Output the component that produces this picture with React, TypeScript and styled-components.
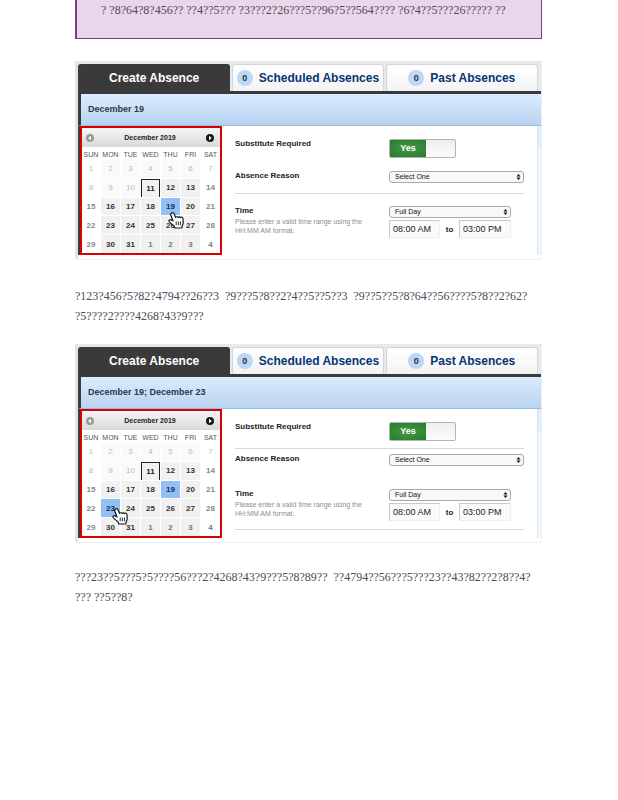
import React from "react";
import styled, { createGlobalStyle } from "styled-components";

const GlobalStyle = createGlobalStyle`
  * { box-sizing: border-box; }
  body { margin: 0; background: #fff; font-family: "Liberation Sans", Arial, sans-serif; color: #222; }
`;

const Page = styled.main`
  padding: 0 76px 24px 75px;
`;

const Callout = styled.aside`
  height: 39px;
  margin-bottom: 22px;
  padding: 0 24px;
  border: 1px solid #803c80;
  border-width: 0 1px 1px 2px;
  background: #e9d6ea;
`;

const Copy = styled.p`
  margin: 0;
  font: 12px/20px "Liberation Serif", "Times New Roman", serif;
  color: #4a4d57;
  white-space: pre;
`;

const Passage = styled.div<{ $last?: boolean }>`
  padding: ${(p) => (p.$last ? 24 : 26)}px 0 18px;
`;

const Panel = styled.section`
  border: 1px solid #eceef1;
  border-width: 3px 1px 1px 3px;
  border-top-color: #e5e9f0;
  border-left-color: #e0e5ed;
  border-radius: 0 0 3px 3px;
`;

const Tabs = styled.nav`
  display: grid;
  grid-template-columns: 152fr 151fr 152fr;
  column-gap: 2px;
  height: 30px;
  padding-right: 3px;
  border-bottom: 3px solid #3a3a3a;
  background: #e5e9f0;
`;

const Tab = styled.button<{ $active?: boolean }>`
  display: flex;
  align-items: center;
  justify-content: center;
  gap: 6px;
  padding: 0;
  border: 1px solid ${(p) => (p.$active ? "#3a3a3a" : "#d3d5d9")};
  border-bottom: 0;
  border-radius: 3px 3px 0 0;
  background: ${(p) => (p.$active ? "#3a3a3a" : "linear-gradient(#fff, #f3f3f4)")};
  color: ${(p) => (p.$active ? "#fff" : "#063574")};
  font: bold 12px/16px "Liberation Sans", Arial, sans-serif;
  white-space: nowrap;
`;

const Count = styled.span`
  width: 16px;
  height: 16px;
  border-radius: 8px;
  background: #bcd7f7;
  color: #333;
  font-size: 9px;
  text-align: center;
`;

const DateBar = styled.h2`
  height: 32px;
  margin: 0;
  padding: 0 7px;
  border-left: 3px solid #3a3a3a;
  border-bottom: 1px solid #9ab9e3;
  background: linear-gradient(#dcecfe, #b8d3f1);
  color: #2d3746;
  font-size: 9px;
  line-height: 31px;
`;

const Body = styled.div`
  display: flex;
  padding-bottom: 4px;
  background: linear-gradient(#3a3a3a, #3a3a3a) left top / 2px 129px no-repeat;
  padding-left: 2px;
`;

const Calendar = styled.div`
  position: relative;
  flex: none;
  width: 142px;
  height: 129px;
  border: 2px solid #d90000;
  background: #fff;
`;

const MonthBar = styled.div`
  display: flex;
  align-items: center;
  justify-content: space-between;
  height: 19px;
  padding: 0 6px 0 4px;
  background: linear-gradient(#f6f6f6, #d9d9d9);
  font-size: 7px;
  font-weight: bold;
`;

const Arrow = styled.button`
  display: flex;
  padding: 0;
  border: 0;
  background: none;
`;

const Month = styled.table`
  display: block;
  font-size: 8px;

  thead, tbody { display: grid; row-gap: 1px; }
  thead { height: 13px; }
  tbody { height: 93px; grid-template-rows: repeat(5, 1fr); }
  tr { display: grid; grid-template-columns: 18px repeat(5, 19px) 1fr; column-gap: 1px; }
  th {
    display: flex;
    justify-content: center;
    padding: 0;
    color: #555;
    font-size: 7px;
    font-weight: normal;
    line-height: 15px;
  }
`;

type Tone = "past" | "work" | "weekend" | "next" | "today" | "picked";
const toneColor: Record<Tone, string> = {
  past: "#bbb",
  work: "#333",
  weekend: "#888",
  next: "#777",
  today: "#222",
  picked: "#0d2b55",
};

const Day = styled.td<{ $tone: Tone; $edge: boolean }>`
  display: flex;
  align-items: center;
  justify-content: center;
  padding: 0;
  border: 0 solid #222;
  border-width: ${(p) => (p.$tone === "today" ? "1px 1px 0 1px" : "0")};
  background: ${(p) =>
    p.$tone === "picked" ? "#91c0f5" : p.$edge ? "#fff" : p.$tone === "past" ? "#fafafa" : "#f1f1f1"};
  color: ${(p) => toneColor[p.$tone]};
  font-weight: ${(p) => (p.$tone === "past" ? "normal" : "bold")};
`;

const Pointer = styled.svg<{ $second: boolean }>`
  position: absolute;
  left: ${(p) => (p.$second ? 30 : 86)}px;
  top: ${(p) => (p.$second ? 97 : 84)}px;
`;

const Form = styled.form`
  flex: 1;
  min-width: 0;
  padding: 0 13px;
`;

const Row = styled.div<{ $line?: boolean; $height: number; $top: number }>`
  display: grid;
  grid-template-columns: 154px 1fr;
  height: ${(p) => p.$height}px;
  padding-top: ${(p) => p.$top}px;
  border-bottom: 1px solid ${(p) => (p.$line ? "#d9d9dc" : "transparent")};
`;

const Label = styled.label`
  display: block;
  color: #202428;
  font-size: 8px;
  font-weight: bold;
  line-height: 10px;
`;

const Hint = styled.p`
  margin: 1px 20px 0 0;
  color: #8b8d92;
  font-size: 7px;
  line-height: 9px;
`;

const Toggle = styled.button`
  display: grid;
  grid-template-columns: 36px 1fr;
  width: 67px;
  height: 19px;
  padding: 0;
  overflow: hidden;
  border: 1px solid #b4b4b4;
  border-radius: 2px;
  background: linear-gradient(#eee, #fcfcfc);
  color: #fff;
  font: bold 9px/17px "Liberation Sans", Arial, sans-serif;
`;

const On = styled.span`
  background: radial-gradient(#45984a, #257d2b);
`;

const SelectBox = styled.div<{ $short?: boolean }>`
  position: relative;
  height: 12px;
  margin-right: ${(p) => (p.$short ? 13 : 0)}px;

  select {
    appearance: none;
    display: block;
    width: 100%;
    height: 12px;
    padding: 0 5px;
    border: 1px solid #a9a9a9;
    border-radius: 3px;
    background: #f8f8f8;
    color: #111;
    font: 7px/10px "Liberation Sans", Arial, sans-serif;
  }
  svg { position: absolute; right: 3px; top: 3px; pointer-events: none; }
`;

const Times = styled.div`
  display: grid;
  grid-template-columns: 51fr 19px 52fr;
  margin: 2px 13px 0 0;
  font-size: 8px;
  font-weight: bold;
  line-height: 19px;
  text-align: center;
`;

const TimeInput = styled.input`
  width: 100%;
  min-width: 0;
  height: 18px;
  padding: 0 3px;
  border: 1px solid #c9c9c9;
  border-right-color: #eee;
  border-bottom-color: #eee;
  background: #fafafa;
  color: #222;
  font: 9px/16px "Liberation Sans", Arial, sans-serif;
`;

const Rail = styled.div`
  flex: none;
  width: 4px;
  border-left: 1px solid #d5e5f7;
  background: linear-gradient(#e2effc 22px, #f0f7fe 22px);
`;

function ArrowIcon({ next }: { next?: boolean }) {
  return (
    <svg width="8" height="8" viewBox="0 0 8 8">
      <circle cx="4" cy="4" r="4" fill={next ? "#161616" : "#999"} />
      <path d={next ? "M3 1.8L5.8 4L3 6.2Z" : "M5 1.8L2.2 4L5 6.2Z"} fill="#fff" />
    </svg>
  );
}

function Stepper() {
  return (
    <svg width="5" height="6" viewBox="0 0 5 6">
      <path d="M2.5 0L4.5 2.4H.5ZM2.5 6L4.5 3.6H.5Z" fill="#111" />
    </svg>
  );
}

function CalendarView({ picked }: { picked: number[] }) {
  const weeks = [0, 1, 2, 3, 4];
  return (
    <Calendar>
      <MonthBar>
        <Arrow type="button" aria-label="Previous month"><ArrowIcon /></Arrow>
        <span>December 2019</span>
        <Arrow type="button" aria-label="Next month"><ArrowIcon next /></Arrow>
      </MonthBar>
      <Month>
        <thead>
          <tr>
            {["SUN", "MON", "TUE", "WED", "THU", "FRI", "SAT"].map((d) => <th key={d} scope="col">{d}</th>)}
          </tr>
        </thead>
        <tbody>
          {weeks.map((w) => (
            <tr key={w}>
              {[1, 2, 3, 4, 5, 6, 7].map((c) => {
                const n = w * 7 + c;
                const edge = c === 1 || c === 7;
                const tone: Tone = picked.includes(n)
                  ? "picked"
                  : n < 11 ? "past" : n === 11 ? "today" : n > 31 ? "next" : edge ? "weekend" : "work";
                return <Day key={n} $tone={tone} $edge={edge}>{n > 31 ? n - 31 : n}</Day>;
              })}
            </tr>
          ))}
        </tbody>
      </Month>
      <Pointer $second={picked.length > 1} width="17" height="17" viewBox="0 0 17 17">
        <path
          d="M4 .8C5 .5 5.8 1 6.2 2L7.6 5.5C8.4 4.4 9.6 4.6 10 5.4C10.8 4.5 12 4.7 12.4 5.6C13.4 4.8 14.8 5.2 15 6.6L15.2 10.5C15.2 12 14.4 13 14 14.6L13.8 16H6.8L6.4 14.4C5 12.8 3.4 11.8 1.2 9.6C.4 8.5 1.6 7.2 3 7.8L5 9L2.8 3C2.4 2 3 1 4 .8Z"
          fill="#fff" stroke="#161616" strokeWidth="1.2" strokeLinejoin="round"
        />
        <path d="M8.2 9.5V13.2M10.3 9.5V13.2M12.4 9.5V13.2" fill="none" stroke="#161616" strokeWidth=".9" />
      </Pointer>
    </Calendar>
  );
}

function AbsencePanel({ id, dates, picked }: { id: string; dates: string; picked: number[] }) {
  const second = picked.length > 1;
  return (
    <Panel>
      <Tabs>
        <Tab type="button" $active>Create Absence</Tab>
        <Tab type="button"><Count>0</Count>Scheduled Absences</Tab>
        <Tab type="button"><Count>0</Count>Past Absences</Tab>
      </Tabs>
      <DateBar>{dates}</DateBar>
      <Body>
        <CalendarView picked={picked} />
        <Form>
          <Row $height={40} $top={13} $line={second}>
            <Label id={`${id}-sub`}>Substitute Required</Label>
            <Toggle type="button" role="switch" aria-checked="true" aria-labelledby={`${id}-sub`}>
              <On>Yes</On>
            </Toggle>
          </Row>
          <Row $height={28} $top={5} $line={!second}>
            <Label htmlFor={`${id}-reason`}>Absence Reason</Label>
            <SelectBox>
              <select id={`${id}-reason`}><option>Select One</option></select>
              <Stepper />
            </SelectBox>
          </Row>
          <Row $height={53} $top={12} $line={second}>
            <div>
              <Label htmlFor={`${id}-span`}>Time</Label>
              <Hint>Please enter a valid time range using the HH:MM AM format.</Hint>
            </div>
            <div>
              <SelectBox $short>
                <select id={`${id}-span`}><option>Full Day</option></select>
                <Stepper />
              </SelectBox>
              <Times>
                <TimeInput aria-label="Start time" defaultValue="08:00 AM" />
                <span>to</span>
                <TimeInput aria-label="End time" defaultValue="03:00 PM" />
              </Times>
            </div>
          </Row>
        </Form>
        <Rail />
      </Body>
    </Panel>
  );
}

export default function App() {
  return (
    <>
      <GlobalStyle />
      <Page>
        <Callout>
          <Copy>{"? ?8?64?8?456?? ??4??5??? ?3???2?26???5??96?5??564???? ?6?4??5???26????? ??"}</Copy>
        </Callout>
        <AbsencePanel id="one" dates="December 19" picked={[19]} />
        <Passage>
          <Copy>{"?123?456?5?82?4794??26??3  ?9???5?8??2?4??5??5??3  ?9??5??5?8?64??56????5?8??2?62?"}</Copy>
          <Copy>{"?5????2????4268?43?9???"}</Copy>
        </Passage>
        <AbsencePanel id="two" dates="December 19; December 23" picked={[19, 23]} />
        <Passage $last>
          <Copy>{"???23??5???5?5????56???2?4268?43?9???5?8?89??  ??4794??56???5???23??43?82??2?8??4?"}</Copy>
          <Copy>{"??? ??5??8?"}</Copy>
        </Passage>
      </Page>
    </>
  );
}
